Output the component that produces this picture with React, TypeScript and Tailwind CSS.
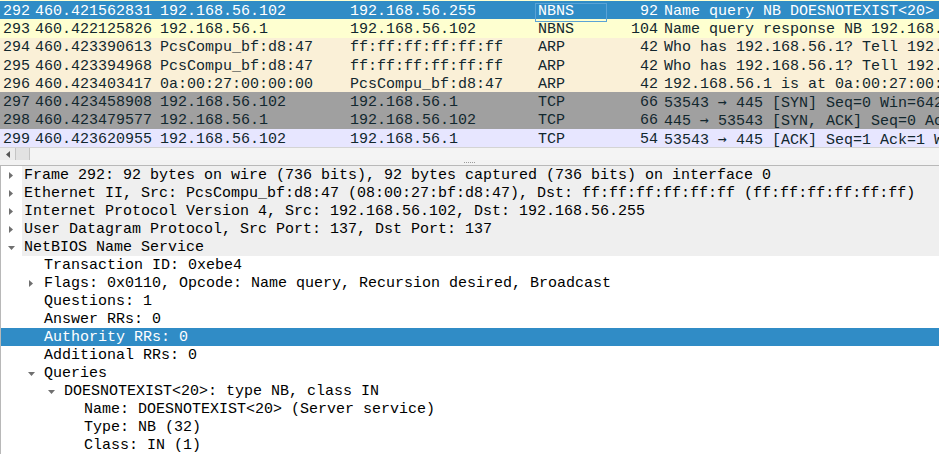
import React from "react";

type Pkt = {
  no: string;
  time: string;
  src: string;
  dst: string;
  proto: string;
  len: string;
  info: string;
  bg: string;
  selected?: boolean;
};

const packets: Pkt[] = [
  { no: "292", time: "460.421562831", src: "192.168.56.102", dst: "192.168.56.255", proto: "NBNS", len: "92", info: "Name query NB DOESNOTEXIST<20>", bg: "bg-[#308cc6] text-white", selected: true },
  { no: "293", time: "460.422125826", src: "192.168.56.1", dst: "192.168.56.102", proto: "NBNS", len: "104", info: "Name query response NB 192.168.56.102", bg: "bg-[#feffd0] text-[#12272e]" },
  { no: "294", time: "460.423390613", src: "PcsCompu_bf:d8:47", dst: "ff:ff:ff:ff:ff:ff", proto: "ARP", len: "42", info: "Who has 192.168.56.1? Tell 192.168.56.102", bg: "bg-[#faf0d7] text-[#12272e]" },
  { no: "295", time: "460.423394968", src: "PcsCompu_bf:d8:47", dst: "ff:ff:ff:ff:ff:ff", proto: "ARP", len: "42", info: "Who has 192.168.56.1? Tell 192.168.56.102", bg: "bg-[#faf0d7] text-[#12272e]" },
  { no: "296", time: "460.423403417", src: "0a:00:27:00:00:00", dst: "PcsCompu_bf:d8:47", proto: "ARP", len: "42", info: "192.168.56.1 is at 0a:00:27:00:00:00", bg: "bg-[#faf0d7] text-[#12272e]" },
  { no: "297", time: "460.423458908", src: "192.168.56.102", dst: "192.168.56.1", proto: "TCP", len: "66", info: "53543 \u2192 445 [SYN] Seq=0 Win=64240 Len=0 MSS=1460 WS=256 SACK_PERM=1", bg: "bg-[#a0a0a0] text-[#12272e]" },
  { no: "298", time: "460.423479577", src: "192.168.56.1", dst: "192.168.56.102", proto: "TCP", len: "66", info: "445 \u2192 53543 [SYN, ACK] Seq=0 Ack=1 Win=64240 Len=0 MSS=1460", bg: "bg-[#a0a0a0] text-[#12272e]" },
  { no: "299", time: "460.423620955", src: "192.168.56.102", dst: "192.168.56.1", proto: "TCP", len: "54", info: "53543 \u2192 445 [ACK] Seq=1 Ack=1 Win=262656 Len=0", bg: "bg-[#e7e6ff] text-[#12272e]" },
];

type Node = {
  text: string;
  level: 0 | 1 | 2 | 3;
  arrow: "none" | "closed" | "open";
  selected?: boolean;
};

const tree: Node[] = [
  { text: "Frame 292: 92 bytes on wire (736 bits), 92 bytes captured (736 bits) on interface 0", level: 0, arrow: "closed" },
  { text: "Ethernet II, Src: PcsCompu_bf:d8:47 (08:00:27:bf:d8:47), Dst: ff:ff:ff:ff:ff:ff (ff:ff:ff:ff:ff:ff)", level: 0, arrow: "closed" },
  { text: "Internet Protocol Version 4, Src: 192.168.56.102, Dst: 192.168.56.255", level: 0, arrow: "closed" },
  { text: "User Datagram Protocol, Src Port: 137, Dst Port: 137", level: 0, arrow: "closed" },
  { text: "NetBIOS Name Service", level: 0, arrow: "open" },
  { text: "Transaction ID: 0xebe4", level: 1, arrow: "none" },
  { text: "Flags: 0x0110, Opcode: Name query, Recursion desired, Broadcast", level: 1, arrow: "closed" },
  { text: "Questions: 1", level: 1, arrow: "none" },
  { text: "Answer RRs: 0", level: 1, arrow: "none" },
  { text: "Authority RRs: 0", level: 1, arrow: "none", selected: true },
  { text: "Additional RRs: 0", level: 1, arrow: "none" },
  { text: "Queries", level: 1, arrow: "open" },
  { text: "DOESNOTEXIST<20>: type NB, class IN", level: 2, arrow: "open" },
  { text: "Name: DOESNOTEXIST<20> (Server service)", level: 3, arrow: "none" },
  { text: "Type: NB (32)", level: 3, arrow: "none" },
  { text: "Class: IN (1)", level: 3, arrow: "none" },
];

const indent = ["w-0", "w-[20px]", "w-[40px]", "w-[60px]"];

function Info({ text }: { text: string }) {
  const parts = text.split("\u2192");
  if (parts.length === 1) return <>{text}</>;
  return (
    <>
      {parts[0]}
      <span className="font-['DejaVu_Sans_Mono',monospace] text-[14.9px]">{"\u2192"}</span>
      {parts[1]}
    </>
  );
}

function Arrow({ kind, light }: { kind: "none" | "closed" | "open"; light?: boolean }) {
  const color = light ? "#ffffff" : "#6f6f6f";
  if (kind === "closed") {
    return (
      <svg width="4" height="7" viewBox="0 0 4 7" className="ml-[8px]">
        <polygon points="0,0 4,3.5 0,7" fill={color} />
      </svg>
    );
  }
  if (kind === "open") {
    return (
      <svg width="7" height="4" viewBox="0 0 7 4" className="ml-[7px]">
        <polygon points="0,0 7,0 3.5,4" fill={color} />
      </svg>
    );
  }
  return null;
}

export default function App() {
  return (
    <div className="w-[939px] h-[455px] overflow-hidden bg-white font-['Liberation_Mono','DejaVu_Sans_Mono',monospace] text-[15px] leading-[18px] text-black">
      {/* packet list */}
      <div className="h-px bg-[#feffd0]" />
      {packets.map((p) => (
        <div key={p.no} className={`flex h-[18.3px] items-center pt-[3px] whitespace-pre ${p.bg}`}>
          <div className="w-[32px] shrink-0 pr-[2px] text-right">{p.no}</div>
          <div className="w-[125px] shrink-0 pl-[3px]">{p.time}</div>
          <div className="w-[190px] shrink-0 pl-[3px]">{p.src}</div>
          <div className="w-[188px] shrink-0 pl-[3px]">{p.dst}</div>
          <div className="relative w-[72px] shrink-0 pl-[3px]">
            {p.proto}
            {p.selected && (
              <div className="absolute left-0 right-0 top-[0px] bottom-[-1px] border border-[#5aa3d6]" />
            )}
          </div>
          <div className="w-[54px] shrink-0 pr-[3px] text-right">{p.len}</div>
          <div className="flex-1 overflow-hidden pl-[3px]">
            <Info text={p.info} />
          </div>
        </div>
      ))}

      {/* horizontal scrollbar */}
      <div className="flex h-[13px] items-stretch border-t border-[#d4d4d4] bg-[#ececec]">
        <div className="flex w-[15px] items-center justify-center">
          <svg width="4" height="7" viewBox="0 0 4 7">
            <polygon points="4,0 0,3.5 4,7" fill="#555555" />
          </svg>
        </div>
        <div className="w-[15px] border-x border-[#c4c4c4] bg-[#e2e2e2]" />
        <div className="flex-1 bg-[#f4f4f4]" />
      </div>

      {/* splitter */}
      <div className="flex h-[5px] items-center justify-center bg-[#f2f2f2]">
        <div className="flex gap-[1px]">
          <div className="h-px w-px bg-[#9a9a9a]" />
          <div className="h-px w-px bg-[#9a9a9a]" />
          <div className="h-px w-px bg-[#9a9a9a]" />
          <div className="h-px w-px bg-[#9a9a9a]" />
          <div className="h-px w-px bg-[#9a9a9a]" />
          <div className="h-px w-px bg-[#9a9a9a]" />
        </div>
      </div>

      {/* packet details */}
      <div className="border-l border-t border-[#b8b8b8] bg-white">
        {tree.map((n, i) => {
          const header = n.level === 0;
          return (
            <div
              key={i}
              className={`flex h-[18px] items-stretch whitespace-pre ${n.selected ? "bg-[#308cc6] text-white" : ""}`}
            >
              <div className={`${indent[n.level]} shrink-0`} />
              <div className="flex w-[21px] shrink-0 items-center pt-[1px]">
                <Arrow kind={n.arrow} light={n.selected} />
              </div>
              <div className={`flex flex-1 items-center pl-[2px] pt-[2px] ${header ? "bg-[#efefef]" : ""}`}>{n.text}</div>
            </div>
          );
        })}
      </div>
    </div>
  );
}
